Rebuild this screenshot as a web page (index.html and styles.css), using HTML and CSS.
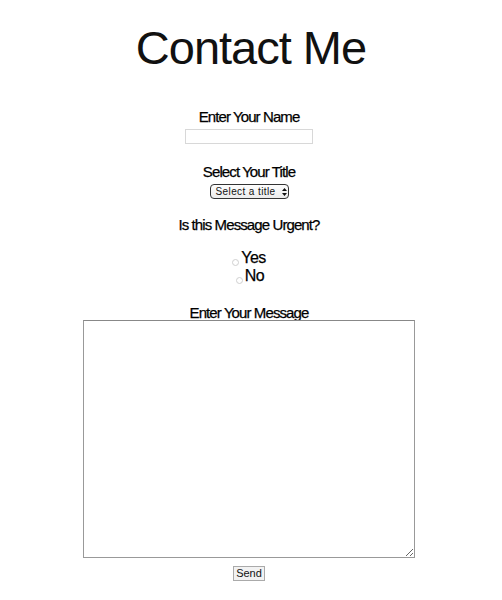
FILE: index.html
```html
<!DOCTYPE html>
<html>
<head>
<meta charset="utf-8">
<link rel="stylesheet" href="styles.css">
</head>
<body>
<h1 class="title">Contact Me</h1>
<form class="form">
  <label class="label" for="name">Enter Your Name</label>
  <input class="text-input" id="name" type="text">
  <label class="label select-label" for="title">Select Your Title</label>
  <div class="select" id="title">Select a title
    <svg class="arrows" width="5" height="8" viewBox="0 0 5 8"><path d="M2.5 0 L5 3 L0 3 Z M0 5 L5 5 L2.5 8 Z" fill="#111"/></svg>
  </div>
  <p class="label urgent-label">Is this Message Urgent?</p>
  <div class="radios">
    <div class="radio-row"><span class="radio"></span><span class="radio-text">Yes</span></div>
    <div class="radio-row radio-row-no"><span class="radio"></span><span class="radio-text">No</span></div>
  </div>
  <label class="label msg-label" for="msg">Enter Your Message</label>
  <textarea class="textarea" id="msg"></textarea>
  <button class="send" type="button">Send</button>
</form>
</body>
</html>
```
FILE: styles.css
```css
html, body {
  margin: 0;
  padding: 0;
  background: #fff;
}
body {
  font-family: "Liberation Sans", Arial, sans-serif;
  color: #000;
  padding-right: 4px;
}
.title {
  margin: 24px 0 0;
  text-align: center;
  font-size: 47px;
  font-weight: normal;
  letter-spacing: -1px;
  line-height: 48px;
  color: #111;
  padding-left: 4px;
}
.form {
  display: flex;
  flex-direction: column;
  align-items: center;
  margin-top: 36px;
}
.label {
  margin: 0;
  font-size: 15px;
  letter-spacing: -0.9px;
  line-height: 18px;
  -webkit-text-stroke: 0.25px #000;
}
.select-label {
  margin-top: 19px;
}
.urgent-label {
  margin-top: 17px;
}
.text-input {
  box-sizing: border-box;
  margin-top: 3px;
  width: 128px;
  height: 15px;
  border: 1px solid #d8d8d8;
  padding: 0;
}
.select {
  box-sizing: border-box;
  margin-top: 3px;
  width: 79px;
  height: 15px;
  border: 1px solid #333;
  border-radius: 4px;
  background: linear-gradient(#fdfdfd, #ececec);
  font-size: 10px;
  letter-spacing: 0.4px;
  line-height: 13px;
  padding-left: 5px;
  color: #111;
  display: flex;
  align-items: center;
}
.arrows {
  margin-left: 6px;
}
.radios {
  display: flex;
  flex-direction: column;
  align-items: center;
  margin-top: 15px;
}
.radio-row {
  display: flex;
  align-items: flex-end;
  height: 18px;
}
.radio-row-no {
  margin-left: 2px;
}
.radio {
  width: 5px;
  height: 5px;
  border: 1px solid #d0d0d0;
  border-radius: 50%;
  margin-right: 2px;
  margin-bottom: 1px;
}
.radio-text {
  font-size: 16px;
  letter-spacing: -0.6px;
  line-height: 18px;
  -webkit-text-stroke: 0.25px #000;
}
.msg-label {
  margin-top: 21px;
  line-height: 14px;
}
.textarea {
  box-sizing: border-box;
  margin-top: 0;
  width: 332px;
  height: 238px;
  border: 1px solid #999;
  border-top-color: #888;
  padding: 0;
  resize: both;
}
.send {
  box-sizing: border-box;
  margin-top: 8px;
  width: 32px;
  height: 15px;
  padding: 0;
  border: 1px solid #aaa;
  background: #f2f2f2;
  font-family: "Liberation Sans", Arial, sans-serif;
  font-size: 11px;
  line-height: 13px;
  color: #111;
}
```
